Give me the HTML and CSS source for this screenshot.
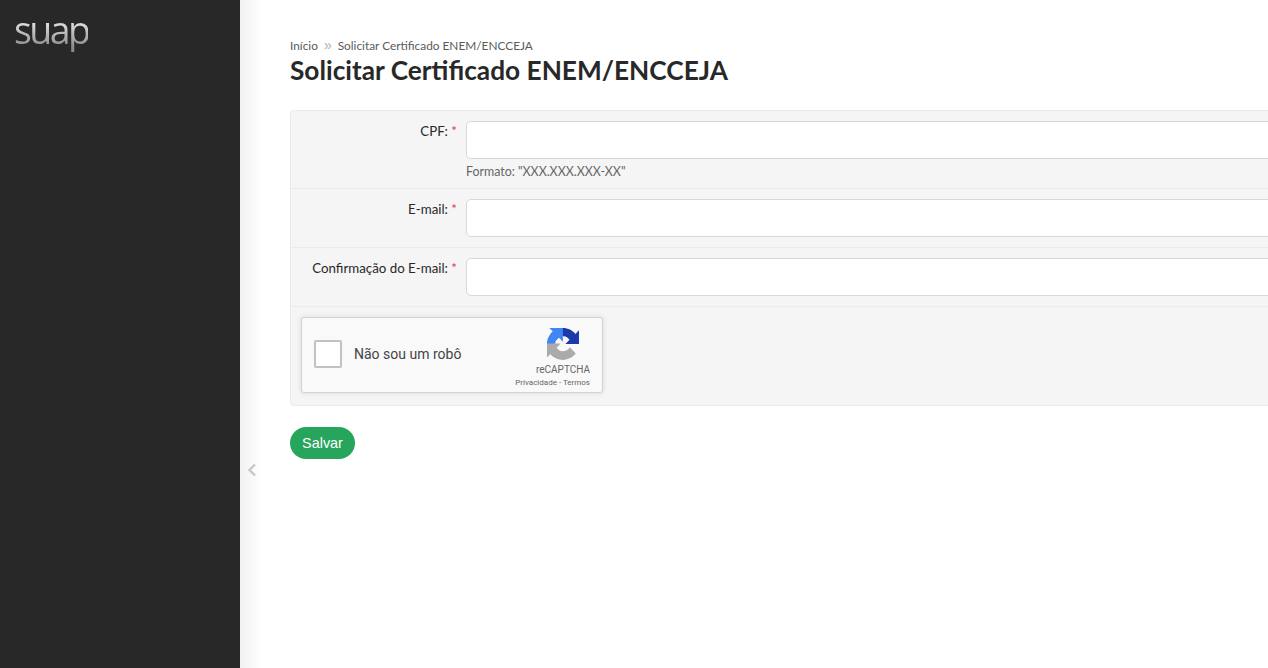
FILE: index.html
```html
<!DOCTYPE html>
<html lang="pt-BR">
<head>
<meta charset="utf-8">
<title>Solicitar Certificado ENEM/ENCCEJA</title>
<link rel="stylesheet" href="styles.css">
</head>
<body>
<div class="layout">
  <aside class="sidebar"><a class="logo">suap</a></aside>
  <main class="main">
    <svg class="collapse" viewBox="0 0 10 14" width="10" height="14"><path d="M8 1.5 2.5 7 8 12.5" fill="none" stroke="#c8c8c8" stroke-width="2.4"/></svg>
    <nav class="breadcrumb"><span>Início</span><span class="sep">»</span><span>Solicitar Certificado ENEM/ENCCEJA</span></nav>
    <h1 class="title">Solicitar Certificado ENEM/ENCCEJA</h1>
    <form class="form">
      <div class="row row-help">
        <label class="label">CPF: <span class="req">*</span></label>
        <div class="field"><div class="input"></div><p class="help">Formato: "XXX.XXX.XXX-XX"</p></div>
      </div>
      <div class="row">
        <label class="label">E-mail: <span class="req">*</span></label>
        <div class="field"><div class="input"></div></div>
      </div>
      <div class="row">
        <label class="label">Confirmação do E-mail: <span class="req">*</span></label>
        <div class="field"><div class="input"></div></div>
      </div>
      <div class="row row-captcha">
        <div class="captcha">
          <span class="check"></span>
          <span class="robot">Não sou um robô</span>
          <div class="brand">
            <svg class="re-icon" viewBox="0 0 64 64" width="32" height="32">
              <path d="M64 31.955l-.033-1.37V4.687l-7.16 7.16C50.948 4.674 42.033.093 32.05.093c-10.4 0-19.622 4.96-25.458 12.64l11.736 11.86a15.55 15.55 0 0 1 4.754-5.334c2.05-1.6 4.952-2.906 8.968-2.906.485 0 .86.057 1.135.163 4.976.393 9.288 3.14 11.828 7.124l-8.307 8.307c10.522-.04 22.4-.066 27.295.004" fill="#1c3aa9"/>
              <path d="M31.862.001l-1.37.033H4.594l7.16 7.16C4.58 13.053 0 21.968 0 31.95c0 10.4 4.96 19.622 12.64 25.458L24.5 45.672a15.55 15.55 0 0 1-5.334-4.754c-1.6-2.05-2.906-4.952-2.906-8.968 0-.485.057-.86.163-1.135.393-4.976 3.14-9.288 7.124-11.828l8.307 8.307c-.04-10.522-.066-22.4.004-27.295" fill="#4285f4"/>
              <path d="M.001 31.955l.033 1.37v25.898l7.16-7.16c5.86 7.173 14.775 11.754 24.757 11.754 10.4 0 19.622-4.96 25.458-12.64L45.673 38.32a15.55 15.55 0 0 1-4.754 5.334c-2.05 1.6-4.952 2.906-8.968 2.906-.485 0-.86-.057-1.135-.163-4.976-.393-9.288-3.14-11.828-7.124l8.307-8.307c-10.522.04-22.4.066-27.295-.004" fill="#ababab"/>
            </svg>
            <span class="re-name">reCAPTCHA</span>
            <span class="re-links">Privacidade - Termos</span>
          </div>
        </div>
      </div>
    </form>
    <button class="save" type="button">Salvar</button>
  </main>
</div>
</body>
</html>
```
FILE: styles.css
```css
* { box-sizing: border-box; }
html, body { margin: 0; height: 100%; overflow: hidden; background: #fff; }
body { font-family: Lato, "Liberation Sans", sans-serif; color: #282828; }
.layout { display: flex; width: 1268px; height: 668px; overflow: hidden; }
.sidebar { flex: 0 0 240px; background: #282828; padding: 8px 0 0 14px; }
.logo {
  display: inline-block;
  font-family: "Open Sans", sans-serif;
  font-weight: 400;
  font-size: 37.5px;
  line-height: 44px;
  letter-spacing: -2.6px;
  background: linear-gradient(#ececec 25%, #8a8a8a 90%);
  -webkit-background-clip: text;
  background-clip: text;
  color: transparent;
}
.main {
  position: relative;
  flex: 1 1 auto;
  min-width: 0;
  padding: 38px 0 0 50px;
  background: linear-gradient(90deg, #f1f1f1 0, #ffffff 22px) no-repeat;
}
.collapse { position: absolute; left: 7px; top: 463px; }
.breadcrumb { display: flex; align-items: baseline; font-size: 11.85px; line-height: 15px; color: #5a5a5a; }
.sep { margin: 0 6px; color: #b0b0b0; font-family: "Liberation Sans", sans-serif; font-size: 14px; }
.title { margin: 1px 0 0; font-size: 26.25px; line-height: 32px; font-weight: 700; color: #282828; }
.form {
  width: 1100px;
  margin-top: 24px;
  background: #f5f5f5;
  border: 1px solid #eaeaea;
  border-radius: 4px;
}
.row { display: flex; gap: 9px; padding: 10px; border-bottom: 1px solid #ebebeb; }
.row-captcha { border-bottom: 0; padding-bottom: 12px; }
.label {
  flex: 0 0 156px;
  padding-top: 2px;
  text-align: right;
  font-size: 13.3px;
  line-height: 16px;
  color: #282828;
}
.req { color: #d8394c; }
.field { flex: 1 1 auto; }
.input { height: 38px; background: #fff; border: 1px solid #d8d8d8; border-radius: 5px; }
.help { margin: 5px 0 0; font-size: 12.4px; line-height: 16px; color: #666; }
.row-help { padding-bottom: 8px; }
.captcha {
  display: flex;
  align-items: center;
  width: 302px;
  height: 76px;
  background: #f9f9f9;
  border: 1px solid #d3d3d3;
  border-radius: 3px;
  box-shadow: 0 0 4px 1px rgba(0, 0, 0, 0.08);
  padding: 0 12px 3px 12px;
  font-family: Roboto, sans-serif;
}
.check { flex: 0 0 28px; height: 28px; background: #fff; border: 2px solid #c1c1c1; border-radius: 2px; }
.robot { margin-left: 12px; font-size: 14px; color: #444; white-space: nowrap; }
.brand { display: flex; flex-direction: column; align-items: flex-end; align-self: flex-start; margin-left: auto; padding-top: 10px; }
.re-icon { display: block; margin: 0 11px 3px 0; }
.re-name { font-size: 10px; line-height: 13px; color: #666; }
.re-links { font-size: 8px; line-height: 13px; color: #666; white-space: nowrap; }
.save {
  display: block;
  margin-top: 21px;
  width: 65px;
  height: 32px;
  padding: 0;
  border: 0;
  border-radius: 16px;
  background: #27a55c;
  color: #fff;
  font-family: "Liberation Sans", sans-serif;
  font-size: 14.4px;
}
```
